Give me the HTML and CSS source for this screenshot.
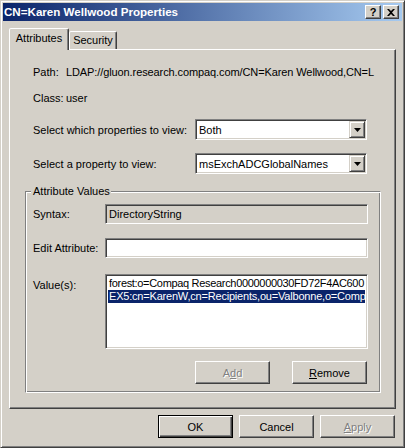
FILE: index.html
```html
<!DOCTYPE html>
<html>
<head>
<meta charset="utf-8">
<title>CN=Karen Wellwood Properties</title>
<link rel="stylesheet" href="styles.css">
</head>
<body>
<div class="window">
  <div class="titlebar">
    <span class="title">CN=Karen Wellwood Properties</span>
    <div class="caption-buttons">
      <span class="cbtn help">?</span>
      <span class="cbtn close"><svg width="8" height="7" viewBox="0 0 8 7"><path d="M0 0h2l2 2 2-2h2L5 3.5 8 7H6L4 5 2 7H0l3-3.5z" fill="#000"/></svg></span>
    </div>
  </div>
  <div class="tabs">
    <div class="tab active">Attributes</div>
    <div class="tab">Security</div>
  </div>
  <div class="panel">
    <div class="info-row first"><span class="key">Path:</span><span class="val path">LDAP://gluon.research.compaq.com/CN=Karen Wellwood,CN=L</span></div>
    <div class="info-row second"><span class="key">Class:</span><span class="val">user</span></div>
    <div class="combo-row first-combo">
      <span class="combo-label">Select which properties to view:</span>
      <div class="combo sunken"><span class="combo-text">Both</span><span class="drop"><svg width="7" height="4" viewBox="0 0 7 4"><path d="M0 0h7L3.5 4z" fill="#000"/></svg></span></div>
    </div>
    <div class="combo-row second-combo">
      <span class="combo-label">Select a property to view:</span>
      <div class="combo sunken"><span class="combo-text">msExchADCGlobalNames</span><span class="drop"><svg width="7" height="4" viewBox="0 0 7 4"><path d="M0 0h7L3.5 4z" fill="#000"/></svg></span></div>
    </div>
    <fieldset class="group">
      <legend class="legend">Attribute Values</legend>
      <div class="g-row">
        <span class="g-label">Syntax:</span>
        <div class="field sunken readonly">DirectoryString</div>
      </div>
      <div class="g-row edit-row">
        <span class="g-label">Edit Attribute:</span>
        <div class="field sunken"></div>
      </div>
      <div class="g-row list-row">
        <span class="g-label list-label">Value(s):</span>
        <div class="listbox sunken">
          <div class="item tight">forest:o=Compaq Research0000000030FD72F4AC600</div>
          <div class="item selected">EX5:cn=KarenW,cn=Recipients,ou=Valbonne,o=Comp</div>
        </div>
      </div>
      <div class="g-buttons">
        <button class="btn disabled">A<u>d</u>d</button>
        <button class="btn"><u>R</u>emove</button>
      </div>
    </fieldset>
  </div>
  <div class="footer">
    <button class="btn default">OK</button>
    <button class="btn">Cancel</button>
    <button class="btn disabled"><u>A</u>pply</button>
  </div>
</div>
</body>
</html>
```

FILE: styles.css
```css
* { box-sizing: border-box; }
html, body { margin: 0; padding: 0; }
body {
  width: 405px;
  height: 448px;
  background: #d4d0c8;
  font-family: "Liberation Sans", Arial, sans-serif;
  font-size: 11px;
  color: #000;
  overflow: hidden;
}
.window {
  width: 405px;
  height: 448px;
  background: #d4d0c8;
  border: 1px solid;
  border-color: #d4d0c8 #404040 #404040 #d4d0c8;
  box-shadow: inset 1px 1px 0 #fff, inset -1px -1px 0 #808080;
  padding: 2px;
}
.titlebar {
  height: 18px;
  display: flex;
  align-items: center;
  justify-content: space-between;
  background: linear-gradient(to right, #0a246a, #a6caf0);
  padding: 0 3px 0 1px;
}
.title {
  color: #fff;
  font-weight: bold;
  font-size: 11.6px;
  line-height: 18px;
  white-space: nowrap;
}
.caption-buttons { display: flex; gap: 2px; }
.cbtn {
  width: 16px;
  height: 14px;
  background: #d4d0c8;
  border: 1px solid;
  border-color: #fff #404040 #404040 #fff;
  box-shadow: inset -1px -1px 0 #808080;
  display: flex;
  align-items: center;
  justify-content: center;
  font-weight: bold;
  font-size: 11px;
  line-height: 12px;
}
.tabs {
  display: flex;
  align-items: flex-end;
  height: 21px;
  margin: 7px 0 0 6px;
}
.tab {
  background: #d4d0c8;
  border: 1px solid;
  border-bottom: none;
  border-color: #fff #404040 transparent #fff;
  border-radius: 2px 2px 0 0;
  box-shadow: inset -1px 0 0 #808080;
  display: flex;
  justify-content: center;
  line-height: 13px;
}
.tab.active {
  width: 60px;
  height: 22px;
  margin-bottom: -1px;
  padding-top: 3px;
  position: relative;
  z-index: 1;
}
.tab:not(.active) {
  width: 48px;
  height: 18px;
  padding-top: 2px;
}
.panel {
  width: 387px;
  height: 360px;
  margin-left: 6px;
  border: 1px solid;
  border-color: #fff #404040 #404040 #fff;
  box-shadow: inset -1px -1px 0 #808080;
  padding: 16px 0 0 15px;
}
.info-row {
  display: flex;
  height: 13px;
  line-height: 13px;
  padding-left: 8px;
  white-space: nowrap;
}
.info-row.second { margin-top: 13px; }
.key { width: 33px; flex: none; }
.val.path { letter-spacing: -0.1px; }
.combo-row {
  display: flex;
  align-items: center;
  padding-left: 8px;
}
.first-combo { margin-top: 14px; }
.second-combo { margin-top: 13px; }
.combo-label { width: 162px; flex: none; }
.sunken {
  border: 1px solid;
  border-color: #808080 #fff #fff #808080;
  box-shadow: inset 1px 1px 0 #404040, inset -1px -1px 0 #d4d0c8;
}
.combo {
  width: 172px;
  height: 21px;
  background: #fff;
  padding: 1px;
  display: flex;
  align-items: center;
}
.combo-text { padding-left: 2px; white-space: nowrap; }
.drop {
  margin-left: auto;
  width: 16px;
  height: 17px;
  background: #d4d0c8;
  border: 1px solid;
  border-color: #d4d0c8 #404040 #404040 #d4d0c8;
  box-shadow: inset 1px 1px 0 #fff, inset -1px -1px 0 #808080;
  display: flex;
  align-items: center;
  justify-content: center;
}
.drop svg { display: block; }
.group {
  width: 356px;
  margin: 11px 0 0 0;
  padding: 6px 0 8px 7px;
  border: 1px solid;
  border-color: #808080 #fff #fff #808080;
  box-shadow: inset 1px 1px 0 #fff, inset -1px -1px 0 #808080;
  min-width: 0;
}
.legend {
  padding: 0 1px 0 2px;
  margin-left: -2px;
  line-height: 13px;
  background: #d4d0c8;
}
.g-row { display: flex; align-items: center; }
.edit-row { margin-top: 14px; }
.list-row { margin-top: 16px; align-items: flex-start; }
.g-label { width: 72px; flex: none; white-space: nowrap; }
.list-label { padding-top: 5px; }
.field {
  width: 263px;
  height: 20px;
  background: #fff;
  padding: 0 3px;
  line-height: 18px;
  white-space: nowrap;
}
.field.readonly { background: #d4d0c8; }
.listbox {
  width: 263px;
  height: 75px;
  background: #fff;
  padding: 2px;
  overflow: hidden;
}
.item {
  line-height: 13px;
  height: 13px;
  padding-left: 1px;
  white-space: nowrap;
  overflow: hidden;
  letter-spacing: -0.2px;
}
.item.tight { letter-spacing: -0.32px; }
.item.selected { background: #0a246a; color: #fff; }
.g-buttons {
  display: flex;
  gap: 22px;
  margin-top: 12px;
  padding-left: 162px;
}
.btn {
  width: 75px;
  height: 23px;
  padding: 0;
  margin: 0;
  background: #d4d0c8;
  border: 1px solid;
  border-color: #fff #404040 #404040 #fff;
  box-shadow: inset -1px -1px 0 #808080;
  font-family: "Liberation Sans", Arial, sans-serif;
  font-size: 11px;
  color: #000;
  display: flex;
  align-items: center;
  justify-content: center;
}
.btn.default {
  border-color: #000;
  box-shadow: inset 1px 1px 0 #fff, inset -1px -1px 0 #404040, inset -2px -2px 0 #808080;
}
.btn.disabled { color: #808080; text-shadow: 1px 1px 0 #fff; }
.footer {
  display: flex;
  justify-content: flex-end;
  gap: 6px;
  margin-top: 6px;
  padding-right: 7px;
}
```
